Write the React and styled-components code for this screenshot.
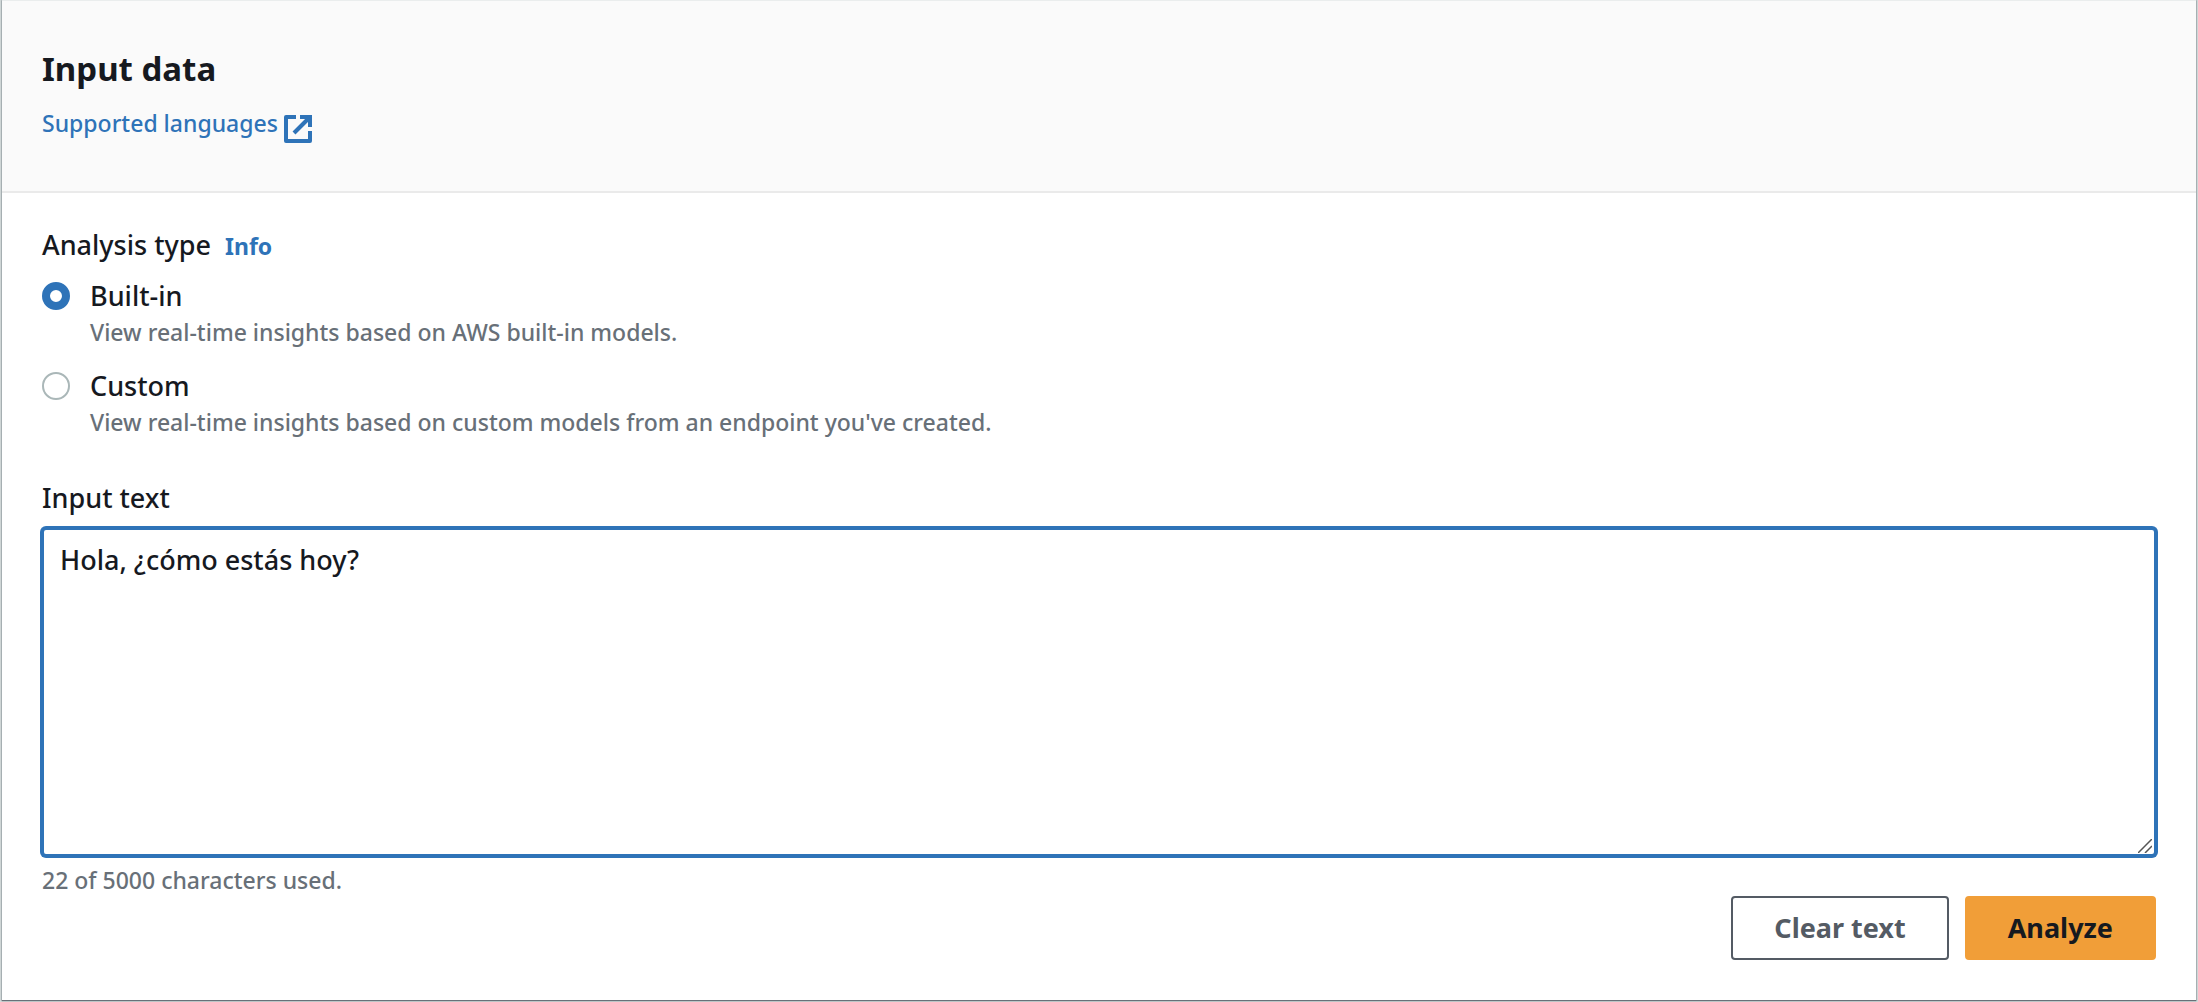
import React from 'react';
import { useState } from 'react';
import styled, { createGlobalStyle, css } from 'styled-components';

const MAX_CHARS = 5000;

const GlobalStyle = createGlobalStyle`
  * {
    box-sizing: border-box;
  }

  body {
    margin: 0;
    background-color: #d5dbdb;
    color: #16191f;
    font-family: "Noto Sans", "Open Sans", sans-serif;
    font-size: 27px;
    font-weight: 500;
    line-height: 40px;
  }
`;

const Panel = styled.form`
  margin: 0 2px 3px;
  background-color: #fff;
  border-top: 1px solid #eaeded;
  box-shadow: 0 1px 1px 0 #687078, 0 0 1px 1px #b4bcbf;
`;

const Header = styled.header`
  padding: 46px 40px 48px;
  background-color: #fafafa;
  border-bottom: 2px solid #eaeaea;
`;

const Title = styled.h2`
  margin: 0 0 16px;
  font-size: 33px;
  line-height: 44px;
  font-weight: 700;
`;

const ExternalLink = styled.a`
  display: flex;
  align-items: flex-start;
  gap: 6px;
  width: fit-content;
  color: #2e73b8;
  font-size: 23px;
  line-height: 32px;
  text-decoration: none;

  svg {
    width: 28px;
    height: 28px;
    margin-top: 8px;
  }

  &:hover {
    text-decoration: underline;
  }
`;

const Content = styled.div`
  display: flex;
  flex-direction: column;
  padding: 32px 40px 40px;
`;

const Group = styled.fieldset`
  display: flex;
  flex-direction: column;
  gap: 18px;
  margin: 0 0 40px;
  padding: 0;
  border: none;
`;

const Legend = styled.legend`
  display: flex;
  align-items: baseline;
  gap: 14px;
  margin-bottom: 10px;
  padding: 0;
`;

const InfoLink = styled.a`
  color: #2e73b8;
  font-size: 23px;
  font-weight: 700;
  text-decoration: none;
`;

const Option = styled.label`
  display: grid;
  grid-template-columns: 28px 1fr;
  column-gap: 20px;
  align-items: center;
  width: fit-content;
  cursor: pointer;
`;

const Radio = styled.input`
  appearance: none;
  width: 28px;
  height: 28px;
  margin: 0;
  border: 2px solid #aab7b8;
  border-radius: 50%;
  background-color: #fff;

  &:checked {
    border: 8px solid #2e73b8;
  }
`;

const Hint = styled.span`
  grid-column: ${({ $indent }) => ($indent ? 2 : 'auto')};
  color: #687078;
  font-size: 23px;
  line-height: 32px;
`;

const FieldLabel = styled.label`
  margin-bottom: 10px;
`;

const TextBox = styled.div`
  position: relative;
  display: flex;
  margin-bottom: 8px;
`;

const TextArea = styled.textarea`
  width: 100%;
  height: 328px;
  padding: 8px 16px;
  border: 2px solid #2e73b8;
  border-radius: 4px;
  box-shadow: 0 0 0 2px #2e73b8;
  outline: none;
  background-color: #fff;
  color: inherit;
  font-family: inherit;
  font-size: 27px;
  font-weight: inherit;
  line-height: 44px;
  resize: vertical;

  &::-webkit-resizer {
    background: transparent;
  }
`;

// drawn over the corner of the textarea
const Grip = styled.svg`
  position: absolute;
  right: 4px;
  bottom: 3px;
  width: 14px;
  height: 14px;
  pointer-events: none;
`;

const Actions = styled.div`
  display: flex;
  justify-content: flex-end;
  gap: 16px;
`;

const Button = styled.button`
  height: 64px;
  padding: 0 41px;
  border: 2px solid #545b64;
  border-radius: 4px;
  background-color: #fff;
  color: #545b64;
  font-family: inherit;
  font-size: 27px;
  font-weight: 700;
  line-height: 40px;
  cursor: pointer;

  ${({ $primary }) => $primary && css`
    border-color: #f19e38;
    background-color: #f19e38;
    color: #16191f;
  `}
`;

const options = [
  { value: 'built-in', label: 'Built-in', hint: 'View real-time insights based on AWS built-in models.' },
  { value: 'custom', label: 'Custom', hint: "View real-time insights based on custom models from an endpoint you've created." },
];

export default function App(){
  const [type, setType] = useState('built-in');
  const [text, setText] = useState('Hola, ¿cómo estás hoy?');

  const handleSubmit = (event) => {
    event.preventDefault();
  };

  return (
    <>
      <GlobalStyle />
      <Panel onSubmit={handleSubmit}>
        <Header>
          <Title>Input data</Title>
          <ExternalLink href="#languages">
            Supported languages
            <svg viewBox="0 0 28 28" fill="none" stroke="currentColor" strokeWidth="4" aria-hidden="true">
              <path d="M12 2H2V26H26V16" strokeLinejoin="round" />
              <path d="M16 2H26V12" />
              <path d="M26 2L10 18" />
            </svg>
          </ExternalLink>
        </Header>

        <Content>
          <Group>
            <Legend>
              Analysis type
              <InfoLink href="#info">Info</InfoLink>
            </Legend>
            {options.map((option) => (
              <Option key={option.value}>
                <Radio
                  type="radio"
                  name="analysis"
                  value={option.value}
                  checked={type === option.value}
                  onChange={() => setType(option.value)}
                />
                <span>{option.label}</span>
                <Hint $indent>{option.hint}</Hint>
              </Option>
            ))}
          </Group>

          <FieldLabel htmlFor="input-text">Input text</FieldLabel>
          <TextBox>
            <TextArea
              id="input-text"
              value={text}
              maxLength={MAX_CHARS}
              spellCheck={false}
              onChange={(event) => setText(event.target.value)}
            />
            <Grip viewBox="0 0 14 14" fill="none" stroke="#555" strokeWidth="1.5" aria-hidden="true">
              <path d="M0 14L14 0M7 14L14 7" />
            </Grip>
          </TextBox>
          <Hint>{text.length} of {MAX_CHARS} characters used.</Hint>

          <Actions>
            <Button type="button" onClick={() => setText('')}>Clear text</Button>
            <Button type="submit" $primary>Analyze</Button>
          </Actions>
        </Content>
      </Panel>
    </>
  );
}
